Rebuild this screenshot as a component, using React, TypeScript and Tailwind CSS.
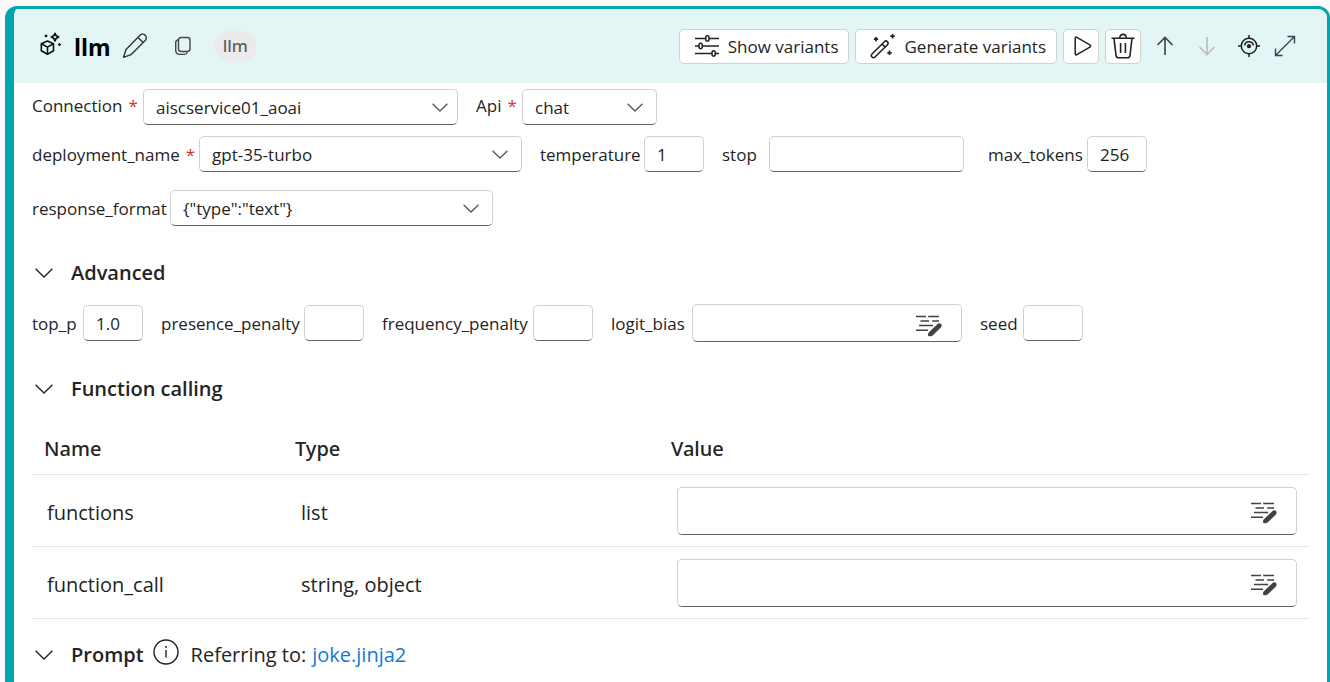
import type { ReactNode } from "react";

type IconProps = { className?: string };

function ChevronIcon({ className = "w-4 h-4" }: IconProps) {
  return (
    <svg viewBox="0 0 18 10" className={className} fill="none" stroke="currentColor" strokeWidth="1.4" aria-hidden="true">
      <path d="M.6.8 9 9l8.400-8.200" />
    </svg>
  );
}

function ModelIcon() {
  return (
    <svg viewBox="0 0 24 26" className="h-[26px] w-6 shrink-0" fill="none" stroke="#111" strokeWidth="1.600" strokeLinejoin="round" aria-hidden="true">
      <path d="m8.500 10 6 2.800v7L8.500 23.300 2.300 19.800v-7L8.500 10Z" />
      <path d="m2.300 12.800 6.200 3.300 6-3.300M8.500 16.100v7.200" />
      <path d="M16 2.200c.5 2.300 1.400 3.300 3.800 3.900-2.400.6-3.300 1.500-3.800 3.900-.5-2.400-1.400-3.300-3.800-3.900C14.600 5.500 15.500 4.500 16 2.200Z" strokeWidth="1.500" />
      <path d="m7 3.200 1.800 1.700L7 6.600 5.200 4.900 7 3.200ZM20.500 11.900l1.800 1.700-1.800 1.700-1.800-1.700 1.800-1.700Z" fill="#111" stroke="none" />
    </svg>
  );
}

function PencilIcon() {
  return (
    <svg viewBox="0 0 26 26" className="h-[26px] w-[26px]" fill="none" stroke="#333" strokeWidth="1.400" strokeLinejoin="round" aria-hidden="true">
      <path d="M18 2.300a3.500 3.500 0 0 1 5.200 0 3.600 3.600 0 0 1 0 5.200L9 21.700 1.500 24.300 4 16.500 18 2.300Z" />
      <path d="m16 4.400 5.200 5.200" />
    </svg>
  );
}

function CopyIcon() {
  return (
    <svg viewBox="0 0 18 20" className="h-5 w-[18px]" fill="none" stroke="#444" strokeWidth="1.400" aria-hidden="true">
      <rect x="4.500" y="1.500" width="11.500" height="14" rx="2.400" />
      <path d="M4.500 3.600C2.600 4 1.700 5 1.700 6.700v7.600c0 2.600 1.500 4.100 4.100 4.100h4.600c1.600 0 2.500-.7 2.900-2" />
    </svg>
  );
}

function SlidersIcon() {
  return (
    <svg viewBox="0 0 26 24" className="h-6 w-[26px]" fill="none" stroke="#222" strokeWidth="1.600" aria-hidden="true">
      <path d="M1 4.500h10.500M15 4.500h10M1 12h4.200M8.600 12H25M1 19.500h16.700M21.500 19.500H25" />
      <rect x="11.700" y="1.800" width="3.300" height="5.400" rx="1.600" />
      <rect x="5" y="9.300" width="3.300" height="5.400" rx="1.600" />
      <rect x="18" y="16.800" width="3.300" height="5.400" rx="1.600" />
    </svg>
  );
}

function WandIcon() {
  return (
    <svg viewBox="0 0 26 26" className="h-[26px] w-[26px]" fill="none" stroke="#222" strokeWidth="1.600" aria-hidden="true">
      <path d="M14.400 8.700a2.100 2.100 0 0 1 3 3L5 24a2.100 2.100 0 0 1-3-3L14.400 8.700Z" />
      <path d="m12 11 3 3" />
      <path d="M6 4v4.400M3.800 6.200h4.400M22.500 1v4.400M20.300 3.200h4.400M19.500 17.600V22M17.300 19.800h4.400" strokeWidth="1.700" />
    </svg>
  );
}

function PlayIcon() {
  return (
    <svg viewBox="0 0 18 20" className="ml-[3px] h-5 w-[18px]" fill="none" stroke="#222" strokeWidth="1.500" strokeLinejoin="round" aria-hidden="true">
      <path d="M1.200 2.300c0-1 .8-1.500 1.700-1l13 7.500c1 .6 1 1.800 0 2.400l-13 7.500c-.9.500-1.700 0-1.700-1V2.300Z" />
    </svg>
  );
}

function TrashIcon() {
  return (
    <svg viewBox="0 0 24 26" className="h-[26px] w-6" fill="none" stroke="#222" strokeWidth="1.600" aria-hidden="true">
      <path d="M.5 5.200h23M8.800 5C8.800 2.700 10 1.400 12 1.400S15.200 2.700 15.200 5M3 5.400l2 17c.2 1.600 1 2.400 2.500 2.400h9c1.500 0 2.300-.8 2.500-2.400l2-17M9.600 10v10M14.400 10v10" />
    </svg>
  );
}

function ArrowIcon({ className = "" }: IconProps) {
  return (
    <svg viewBox="0 0 18 20" className={`h-5 w-[18px] ${className}`} fill="none" stroke="currentColor" strokeWidth="1.600" aria-hidden="true">
      <path d="M9 19V1.500M1.500 9 9 1.500 16.500 9" />
    </svg>
  );
}

function LocateIcon() {
  return (
    <svg viewBox="0 0 22 22" className="h-[22px] w-[22px]" fill="none" stroke="#1f1f1f" strokeWidth="1.500" aria-hidden="true">
      <circle cx="11" cy="11" r="7.700" />
      <path d="M11 0v3.500M11 18.500V22M0 11h3.500M18.500 11H22M6.500 10.500C7 8 8.700 6.700 11 6.700s4 1.300 4.500 3.800" />
      <circle cx="11" cy="11.200" r="2.100" fill="#1f1f1f" stroke="none" />
    </svg>
  );
}

function ExpandIcon() {
  return (
    <svg viewBox="0 0 22 22" className="h-[22px] w-[22px]" fill="none" stroke="#345" strokeWidth="1.400" aria-hidden="true">
      <path d="M1.500 20.500 20.500 1.500M13.500 1.500h7v7M1.500 13.500v7h7" />
    </svg>
  );
}

function EditTextIcon() {
  return (
    <svg viewBox="0 0 28 24" className="h-6 w-7" fill="none" stroke="#424242" strokeWidth="1.500" aria-hidden="true">
      <path d="M1 2.500h10M13.200 2.500H24M5.500 7h8.500M17.200 7H24M4 11.500h14M1 16.200h12" />
      <path d="M22.300 10.200c1.600-1.600 3.800-.8 4.300.9.200.9-.1 1.700-.7 2.300l-8 7.900c-.5.500-1.100.8-1.700.9-1.400.3-3.600.2-3.200-1.800.2-.9.500-1.700 1.200-2.400l8.100-7.800Z" fill="#424242" stroke="none" />
    </svg>
  );
}

function InfoIcon() {
  return (
    <svg viewBox="0 0 26 26" className="h-[26px] w-[26px]" fill="none" stroke="#222" strokeWidth="1.400" aria-hidden="true">
      <circle cx="13" cy="13" r="12" />
      <path d="M13 11v7.500" />
      <circle cx="13" cy="8" r="1" fill="#222" stroke="none" />
    </svg>
  );
}

const box = "rounded-[5px] border border-[#d1d1d1] border-b-[#616161] bg-white text-[17px] text-[#242424]";

type FieldProps = { id: string; label: string; labelWidth: string; required?: boolean; children: ReactNode };

function Field({ id, label, labelWidth, required, children }: FieldProps) {
  return (
    <div className="flex items-center">
      <label htmlFor={id} className={`${labelWidth} shrink-0 pt-[2px] whitespace-nowrap text-[17px] leading-6`}>
        {label}
        {required && <span className="ml-[6px] text-[#d13438]">*</span>}
      </label>
      {children}
    </div>
  );
}

type SelectProps = { id: string; width: string; value: string; chevronInset?: string };

function Select({ id, width, value, chevronInset = "right-[14px]" }: SelectProps) {
  return (
    <div className={`relative ${width}`}>
      <select id={id} defaultValue={value} className={`${box} h-9 w-full appearance-none pt-[2px] pr-10 pl-3`}>
        <option>{value}</option>
      </select>
      <ChevronIcon className={`pointer-events-none absolute top-[14px] h-[9px] w-4 text-[#555] ${chevronInset}`} />
    </div>
  );
}

function TextBox({ id, width = "w-[60px]", value = "" }: { id: string; width?: string; value?: string }) {
  return <input id={id} type="text" defaultValue={value} className={`${box} h-9 px-3 ${width}`} />;
}

function EditableBox({ id, width, height, label }: { id: string; width: string; height: string; label?: string }) {
  return (
    <div className={`flex items-center pt-[5px] pr-[18px] ${box} ${width} ${height}`}>
      <input id={id} type="text" aria-label={label} className="min-w-0 flex-1 bg-transparent px-3 outline-none" />
      <button type="button" aria-label="Edit value">
        <EditTextIcon />
      </button>
    </div>
  );
}

function SectionTitle({ children }: { children: ReactNode }) {
  return (
    <button type="button" className="flex items-center gap-[18px] text-xl leading-7 font-semibold">
      <ChevronIcon className="ml-[3px] h-[10px] w-[18px]" />
      {children}
    </button>
  );
}

const rows = [
  { name: "functions", type: "list" },
  { name: "function_call", type: "string, object" },
];

const outlineButton = "flex h-[35px] items-center rounded-[5px] border border-[#d1d1d1] bg-white";
const variantButton = `${outlineButton} gap-2 pr-[10px] pl-[14px] text-[17px] whitespace-nowrap`;

export default function App() {
  return (
    <div className="flex min-h-screen flex-col bg-[#fafafa] pt-[6px] pl-[5px] font-['Open_Sans',sans-serif] text-[#242424]">
      <main className="flex-1 overflow-hidden rounded-t-[12px] border-t-3 border-r-3 border-l-9 border-[#00a5af] bg-white">
        <header className="flex h-[74px] items-center bg-[#e3f5f5] pr-[31px] pl-[25px]">
          <div className="mb-1">
            <ModelIcon />
          </div>
          <h1 className="ml-[11px] pt-[2px] text-[23px] font-bold text-black">llm</h1>
          <button type="button" aria-label="Rename" className="ml-[11px]">
            <PencilIcon />
          </button>
          <button type="button" aria-label="Copy" className="ml-[26px]">
            <CopyIcon />
          </button>
          <span className="ml-[22px] rounded-full bg-[#ebebeb] px-[9px] font-['Noto_Sans',sans-serif] text-[17px] leading-[30px] font-medium text-[#616161]">
            llm
          </span>
          <div className="ml-auto flex items-center gap-[6px]">
            <button type="button" className={variantButton}>
              <SlidersIcon />
              <span className="pt-px">Show variants</span>
            </button>
            <button type="button" className={variantButton}>
              <WandIcon />
              <span className="pt-px">Generate variants</span>
            </button>
            <button type="button" aria-label="Run" className={`${outlineButton} w-9 justify-center`}>
              <PlayIcon />
            </button>
            <button type="button" aria-label="Delete" className={`${outlineButton} w-9 justify-center`}>
              <TrashIcon />
            </button>
          </div>
          <div className="ml-[15px] flex items-center gap-6">
            <button type="button" aria-label="Move up" className="text-[#424242]">
              <ArrowIcon />
            </button>
            <button type="button" aria-label="Move down" disabled className="text-[#bdbdbd]">
              <ArrowIcon className="rotate-180" />
            </button>
          </div>
          <div className="ml-[22px] flex items-center gap-[14px]">
            <button type="button" aria-label="Locate in graph">
              <LocateIcon />
            </button>
            <button type="button" aria-label="Expand">
              <ExpandIcon />
            </button>
          </div>
        </header>

        <div className="pt-[6px] pr-[18px] pl-[18px]">
          <div className="flex flex-wrap gap-x-[18px] [&_label]:pt-0 [&_label]:pb-[2px]">
            <Field id="connection" label="Connection" labelWidth="w-[111px]" required>
              <Select id="connection" width="w-[315px]" value="aiscservice01_aoai" chevronInset="right-[10px]" />
            </Field>
            <Field id="api" label="Api" labelWidth="w-[46px]" required>
              <Select id="api" width="w-[135px]" value="chat" />
            </Field>
          </div>
          <div className="mt-[11px] flex flex-wrap gap-x-[18px] gap-y-[18px]">
            <Field id="deployment" label="deployment_name" labelWidth="w-[167px]" required>
              <Select id="deployment" width="w-[323px]" value="gpt-35-turbo" />
            </Field>
            <Field id="temperature" label="temperature" labelWidth="w-[104px]">
              <TextBox id="temperature" value="1" />
            </Field>
            <Field id="stop" label="stop" labelWidth="w-[47px]">
              <TextBox id="stop" width="w-[195px]" />
            </Field>
            <div className="ml-[6px]">
              <Field id="max-tokens" label="max_tokens" labelWidth="w-[99px]">
                <TextBox id="max-tokens" value="256" />
              </Field>
            </div>
            <Field id="response-format" label="response_format" labelWidth="w-[138px]">
              <Select id="response-format" width="w-[323px]" value={'{"type":"text"}'} />
            </Field>
          </div>

          <section className="mt-[33px]">
            <SectionTitle>Advanced</SectionTitle>
            <div className="mt-[17px] flex flex-wrap items-center gap-x-[18px]">
              <Field id="top-p" label="top_p" labelWidth="w-[51px]">
                <TextBox id="top-p" value="1.0" />
              </Field>
              <Field id="presence" label="presence_penalty" labelWidth="w-[143px]">
                <TextBox id="presence" />
              </Field>
              <Field id="frequency" label="frequency_penalty" labelWidth="w-[151px]">
                <TextBox id="frequency" />
              </Field>
              <Field id="logit-bias" label="logit_bias" labelWidth="w-[81px]">
                <EditableBox id="logit-bias" width="w-[270px]" height="h-[38px]" />
              </Field>
              <Field id="seed" label="seed" labelWidth="w-[43px]">
                <TextBox id="seed" />
              </Field>
            </div>
          </section>

          <section className="mt-[33px]">
            <SectionTitle>Function calling</SectionTitle>
            <table className="mt-5 w-full table-fixed border-collapse text-left text-xl leading-7">
              <colgroup>
                <col className="w-[251px]" />
                <col className="w-[376px]" />
                <col />
              </colgroup>
              <thead className="font-['Noto_Sans',sans-serif]">
                <tr className="h-[51px] border-b border-[#e5e5e5]">
                  <th className="px-3 pt-[2px] font-medium">Name</th>
                  <th className="px-3 pt-[2px] font-medium">Type</th>
                  <th className="px-3 pt-[2px] font-medium">Value</th>
                </tr>
              </thead>
              <tbody>
                {rows.map((row) => (
                  <tr key={row.name} className="h-[72px] border-b border-[#e5e5e5]">
                    <td className="pt-[6px] pl-[15px]">{row.name}</td>
                    <td className="pt-[6px] pl-[18px]">{row.type}</td>
                    <td className="pt-px pr-3 pl-[18px]">
                      <EditableBox id={row.name} width="w-full" height="h-12" label={`${row.name} value`} />
                    </td>
                  </tr>
                ))}
              </tbody>
            </table>
          </section>

          <section className="mt-5 flex items-center text-xl leading-7">
            <SectionTitle>Prompt</SectionTitle>
            <button type="button" aria-label="About prompts" className="mr-3 mb-[6px] ml-[9px]">
              <InfoIcon />
            </button>
            <span>Referring to:</span>
            <a href="#joke" className="ml-[6px] text-[#0f7bd6]">
              joke.jinja2
            </a>
          </section>
        </div>
      </main>
    </div>
  );
}
